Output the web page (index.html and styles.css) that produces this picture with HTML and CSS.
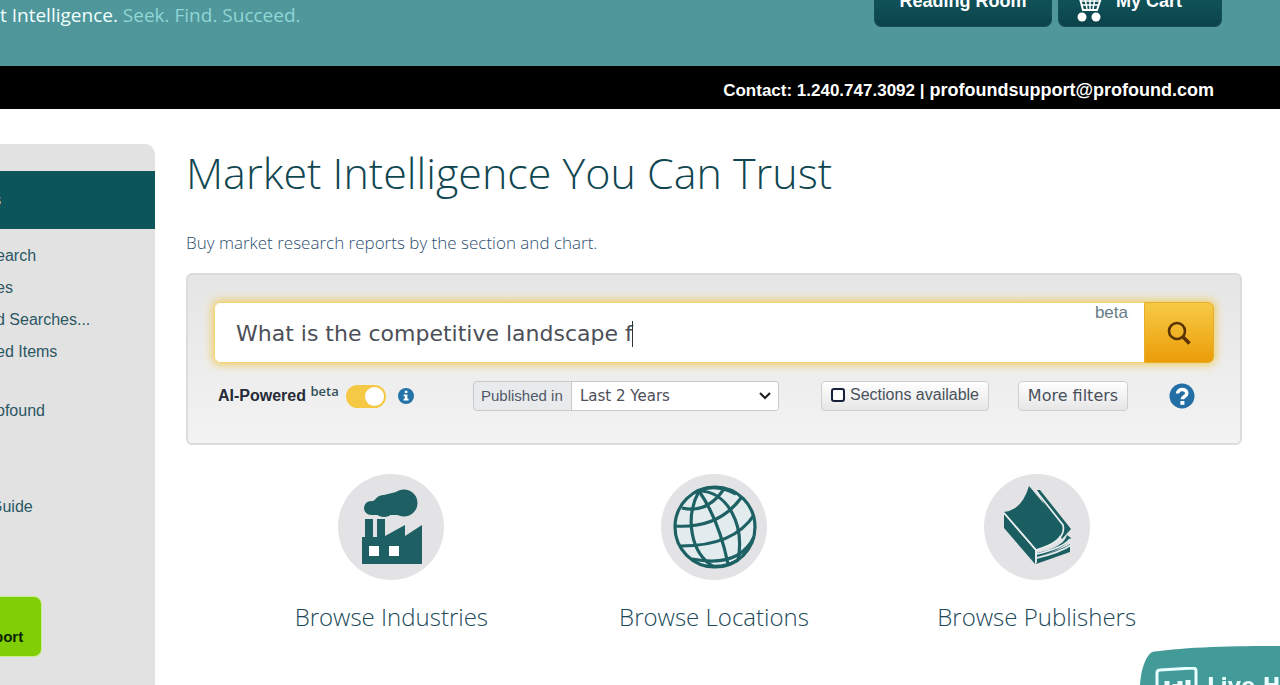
FILE: index.html
```html
<!DOCTYPE html>
<html lang="en">
<head>
<meta charset="utf-8">
<title>Market Intelligence You Can Trust</title>
<link rel="stylesheet" href="styles.css">
</head>
<body>
<header class="header">
  <p class="tagline"><span class="tagline-lead">t Intelligence.</span> Seek. Find. Succeed.</p>
  <nav class="header-nav">
    <button class="header-button reading" type="button">Reading Room</button>
    <button class="header-button cart" type="button">
      <svg class="cart-icon" viewBox="0 0 30 30" aria-hidden="true"><path d="M1 3h5l4 15h14l4-12H7" fill="none" stroke="#fff" stroke-width="2"/><path d="M8 9h18M9 13h16M12 6l2 11M17 6v11M22 6l-2 11" stroke="#fff" stroke-width="1.5"/><circle cx="9" cy="25" r="4.5" fill="#fff"/><circle cx="23" cy="25" r="4.5" fill="#fff"/></svg>
      My Cart
    </button>
  </nav>
</header>
<div class="contact"><span class="phone">Contact: 1.240.747.3092 |</span> <a href="mailto:profoundsupport@profound.com">profoundsupport@profound.com</a></div>
<div class="layout">
  <aside class="sidebar">
    <div class="sidebar-title">s</div>
    <ul class="side-list">
      <li><a href="#">earch</a></li>
      <li><a href="#">es</a></li>
      <li><a href="#">d Searches...</a></li>
      <li><a href="#">ed Items</a></li>
      <li class="gap-small"><a href="#">ofound</a></li>
      <li class="gap-large"><a href="#">Guide</a></li>
    </ul>
    <button class="support" type="button">port</button>
  </aside>
  <main class="main">
    <h1 class="title">Market Intelligence You Can Trust</h1>
    <p class="subtitle">Buy market research reports by the section and chart.</p>
    <form class="panel">
      <div class="search">
        <input class="search-input" type="text" aria-label="Search" value="What is the competitive landscape f">
        <span class="caret"></span>
        <span class="search-beta">beta</span>
        <button class="search-button" type="button" aria-label="Search"><svg viewBox="0 0 24 24" width="24" height="24"><circle cx="10" cy="10" r="8" fill="none" stroke="#5a3305" stroke-width="2.6"/><path d="M15.5 15.5l7 7" stroke="#5a3305" stroke-width="3.6"/></svg></button>
      </div>
      <div class="filters">
        <div class="ai">
          <label class="ai-label" for="ai">AI-Powered <sup>beta</sup></label>
          <input class="toggle" id="ai" type="checkbox" role="switch" checked>
          <svg class="info" viewBox="0 0 16 16" aria-hidden="true"><circle cx="8" cy="8" r="8" fill="#2474a9"/><path d="M6.8 2.8h2.6v2.2H6.8zM5.6 6.4h3.8v4.4h1.2v1.8H5.6v-1.8h1.2V8.2H5.6z" fill="#fff"/></svg>
        </div>
        <div class="published">
          <label class="published-label" for="period">Published in</label>
          <span class="select-wrap"><select class="published-select" id="period"><option>Last 2 Years</option></select><svg class="chevron" viewBox="0 0 14 10" aria-hidden="true"><path d="M2 2l5 5 5-5" fill="none" stroke="#222" stroke-width="2.2"/></svg></span>
        </div>
        <label class="chip sections"><input class="check" type="checkbox">Sections available</label>
        <button class="chip more" type="button">More filters</button>
        <a class="help" href="#" aria-label="Help"><svg viewBox="0 0 26 26" width="26" height="26"><circle cx="13" cy="13" r="12.5" fill="#236fa5"/><path d="M8.6 10.5c0-5.2 9.2-5.2 9.2-.3 0 3.6-4.4 3-4.4 6" fill="none" stroke="#fff" stroke-width="3.6"/><path d="M11.4 18h4v3.8h-4z" fill="#fff"/></svg></a>
      </div>
    </form>
    <nav class="browse">
      <a class="browse-item" href="#">
        <svg class="browse-icon" viewBox="0 0 106 106" aria-hidden="true"><circle cx="53" cy="53" r="53" fill="#e3e3e5"/><g fill="#1d5f63"><circle cx="33" cy="34" r="7"/><circle cx="46" cy="32" r="11"/><circle cx="66" cy="29" r="13.5"/><path d="M33 28l13-7 16-4v24H46l-13 0z"/><path d="M27 45h8v18h4V45h8v17l20-11v11l17-11v39H24V63h3z"/></g><path d="M31 72h10v10H31zM51 72h10v10H51z" fill="#fff"/></svg>
        Browse Industries
      </a>
      <a class="browse-item" href="#">
        <svg class="browse-icon" viewBox="0 0 106 106" aria-hidden="true"><circle cx="53" cy="53" r="53" fill="#e3e3e5"/><circle cx="54" cy="53" r="40" fill="#e2ecef"/><g fill="none" stroke="#1d6164" stroke-width="3.2"><circle cx="54" cy="53" r="40"/><path d="M38 17C24 43 29 79 53 93"/><path d="M38 17Q58 46 67 90"/><path d="M38 17C66 17 84 50 77 86"/><path d="M38 17Q54 9 75 20"/><path d="M21 34Q46 40 63 15"/><path d="M14 52Q57 55 80 24"/><path d="M20 72Q73 72 93 41"/><path d="M31 85Q78 94 93 63M45 92Q65 94 77 86"/></g></svg>
        Browse Locations
      </a>
      <a class="browse-item" href="#">
        <svg class="browse-icon" viewBox="0 0 106 106" aria-hidden="true"><circle cx="53" cy="53" r="53" fill="#e3e3e5"/><g fill="#1b5e62"><path d="M53 16l3 0 31 39-9 10z"/><path d="M53 79Q80 73 83 61l4 3q-6 11-34 19z"/><path d="M53 83Q77 76 86 70v8L52 90z"/><path d="M20 40l31 36v14L20 54z"/></g><path d="M45 12l33 39Q80 68 53 76L20 38Q38 36 45 12z" fill="#1b5e62"/><path d="M20 39l32 37v13M52 76Q83 67 79 51L53 18M53 80Q79 74 86 65M53 84Q77 78 87 71" fill="none" stroke="#e8eef0" stroke-width="1.7"/></svg>
        Browse Publishers
      </a>
    </nav>
  </main>
</div>
<button class="live-help" type="button">
  <svg class="live-shape" viewBox="0 0 140 40" preserveAspectRatio="none" aria-hidden="true"><path d="M0 40C1 22 7 8 13 6C45 1 95 0 140 0V40z" fill="#429b98"/></svg>
  <svg class="live-icon" viewBox="0 0 44 24" aria-hidden="true"><path d="M2 24V6Q2 3 5 3L38 1Q41 1 41 4V24" fill="none" stroke="#e9ffff" stroke-width="3"/><path d="M12 24V14M20 24v-7M25 24V14M33 24V13" stroke="#e9ffff" stroke-width="5"/></svg>
  <span class="live-text">Live H</span>
</button>
</body>
</html>
```

FILE: styles.css
```css
* { box-sizing: border-box; }
body {
  margin: 0;
  background: #fff;
  color: #164b54;
  font-family: "Liberation Sans", Arial, sans-serif;
  height: 100vh;
  overflow: hidden;
}
a { color: inherit; text-decoration: none; }
button, input, select { font: inherit; color: inherit; }
.header {
  height: 66px;
  background: #4f979a;
  display: flex;
  justify-content: space-between;
  align-items: flex-start;
  padding-right: 58px;
}
.tagline {
  margin: 0;
  padding-top: 2px;
  font: 19px/26px "Open Sans", sans-serif;
  color: #8fd6d6;
}
.tagline-lead { color: #f2ffff; }
.header-nav { display: flex; gap: 6px; }
.header-button {
  height: 52px;
  margin-top: -25px;
  border: 1px solid #125056;
  border-radius: 7px;
  background: linear-gradient(#146068, #0b4349);
  color: #fff;
  font-size: 18px;
  font-weight: bold;
  line-height: 26px;
}
.reading { width: 178px; }
.cart { width: 164px; display: flex; align-items: center; gap: 13px; padding: 0 14px; }
.cart-icon { width: 30px; height: 30px; margin-top: 12px; }
.contact {
  height: 43px;
  padding-right: 66px;
  background: #000;
  color: #fff;
  font-size: 18px;
  font-weight: bold;
  line-height: 48px;
  text-align: right;
}
.phone { font-size: 17px; }
.layout { display: flex; height: calc(100vh - 109px); padding-top: 35px; }
.sidebar {
  flex: 0 0 155px;
  height: 100%;
  padding-top: 27px;
  background: #e2e2e2;
  border-radius: 0 10px 0 0;
  overflow: hidden;
}
.sidebar-title {
  height: 58px;
  margin-left: -7px;
  background: #0b555b;
  color: #fff;
  font-size: 16px;
  line-height: 58px;
}
.side-list {
  list-style: none;
  margin: 11px 0 0 -4px;
  padding: 0;
  font-size: 16px;
  line-height: 32px;
  color: #2a5763;
}
.side-list a { display: block; }
.gap-small { margin-top: 27px; }
.gap-large { margin: 64px 0 0 -6px; }
.support {
  display: block;
  width: 42px;
  height: 61px;
  margin-top: 73px;
  margin-left: 0;
  padding: 20px 0 0;
  border: solid #c9f08c;
  border-width: 1px 1px 1px 0;
  border-radius: 0 8px 8px 0;
  background: #80cf06;
  color: #0c2502;
  font-size: 15px;
  font-weight: bold;
  text-align: left;
  text-indent: -6px;
}
.main { flex: 1; min-width: 0; padding: 0 38px 0 31px; }
.title {
  margin: 0;
  font: 300 43px/58px "Open Sans", sans-serif;
  color: #104650;
  white-space: nowrap;
}
.subtitle {
  margin: 29px 0 18px;
  font: 300 17px/24px "Open Sans", sans-serif;
  color: #2c4f70;
}
.panel {
  height: 172px;
  padding: 27px 26px 0;
  border: 2px solid #dcdcdc;
  border-radius: 6px;
  background: linear-gradient(#e5e5e5, #f3f3f3);
}
.search {
  position: relative;
  display: flex;
  height: 61px;
  border-radius: 6px;
  box-shadow: 0 0 8px 2px #f0ce66;
}
.search-input {
  flex: 1;
  min-width: 0;
  padding: 2px 21px 0;
  border: 1px solid #f2d777;
  border-right: 0;
  border-radius: 6px 0 0 6px;
  outline: none;
  background: #fff;
  color: #4c4f57;
  font: 22px "DejaVu Sans", sans-serif;
}
.caret { position: absolute; left: 418px; top: 19px; width: 1px; height: 26px; background: #333; }
.search-beta {
  position: absolute;
  top: 1px;
  right: 86px;
  font-size: 17px;
  line-height: 20px;
  color: #697c88;
}
.search-button {
  width: 70px;
  padding: 4px 0 0;
  border: 1px solid #e6ae25;
  border-radius: 0 6px 6px 0;
  background: linear-gradient(#f7ca45, #eb9d09);
}
.filters { display: flex; align-items: center; height: 30px; margin-top: 18px; padding-left: 4px; }
.ai { display: flex; align-items: center; width: 255px; }
.ai-label { font-size: 16px; font-weight: bold; color: #252b38; white-space: nowrap; }
.ai-label sup { font: 600 13px/1px "Open Sans", sans-serif; vertical-align: 5px; color: #315058; }
.toggle {
  appearance: none;
  flex: none;
  width: 40px;
  height: 23px;
  margin: 0 12px 0 7px;
  padding: 2px;
  border-radius: 12px;
  background: #f5c943;
  display: flex;
  justify-content: flex-end;
}
.toggle::before { content: ""; width: 19px; height: 19px; border-radius: 50%; background: #fff; }
.info { width: 16px; height: 16px; }
.published {
  display: flex;
  width: 306px;
  height: 30px;
  border: 1px solid #c9c9c9;
  border-radius: 4px;
  background: #e9eaec;
  overflow: hidden;
}
.published-label { width: 97px; padding-left: 7px; font-size: 15px; line-height: 28px; color: #4e5a68; white-space: nowrap; }
.select-wrap { position: relative; flex: 1; border-left: 1px solid #c9c9c9; background: #fff; }
.published-select {
  appearance: none;
  width: 100%;
  height: 28px;
  padding: 0 8px;
  border: 0;
  background: transparent;
  color: #4e4e5a;
  font: 15px "DejaVu Sans", sans-serif;
}
.chevron { position: absolute; right: 6px; top: 9px; width: 14px; height: 10px; }
.chip {
  display: flex;
  align-items: center;
  justify-content: center;
  height: 30px;
  padding: 0 6px 2px;
  border: 1px solid #cfcfcf;
  border-radius: 4px;
  background: linear-gradient(#fff, #e6e6e6);
  color: #49505a;
  white-space: nowrap;
}
.sections { width: 168px; margin-left: 42px; font-size: 16px; }
.check { appearance: none; flex: none; width: 14px; height: 14px; margin: 0 5px 0 0; border: 2px solid #17203a; border-radius: 3px; background: #fff; }
.more { width: 110px; margin-left: 29px; font: 16px "DejaVu Sans", sans-serif; }
.help { display: flex; margin-left: 41px; }
.browse { display: flex; margin-top: 29px; padding: 0 44px; }
.browse-item {
  flex: 1;
  display: flex;
  flex-direction: column;
  align-items: center;
  gap: 20px;
  color: #1b4959;
  font: 24px/34px "Open Sans", sans-serif;
  font-weight: 300;
  white-space: nowrap;
}
.browse-icon { width: 106px; height: 106px; }
.live-help {
  position: fixed;
  right: 0;
  bottom: 0;
  width: 140px;
  height: 39px;
  padding: 0;
  border: 0;
  background: none;
  overflow: hidden;
  display: flex;
  align-items: flex-start;
}
.live-shape { position: absolute; inset: 0; width: 100%; height: 100%; }
.live-icon { position: relative; flex: none; width: 44px; height: 24px; margin: 21px 8px 0 15px; }
.live-text { position: relative; margin-top: 26px; color: #e9ffff; font: bold 21px/28px "DejaVu Sans", sans-serif; white-space: nowrap; }
```
